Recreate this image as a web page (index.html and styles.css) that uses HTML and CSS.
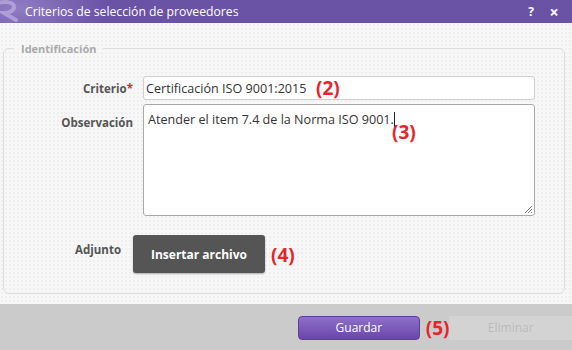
FILE: index.html
```html
<!DOCTYPE html>
<html lang="es">
<head>
  <meta charset="UTF-8">
  <meta name="viewport" content="width=device-width, initial-scale=1.0">
  <title>Criterios de selección de proveedores</title>
  <link rel="stylesheet" href="styles.css">
</head>
<body>

  <div class="dialog">
    <!-- Title bar -->
    <div class="titlebar">
      <svg class="logo" width="24" height="22" viewBox="0 0 24 22">
        <path d="M-2 3 C6 1 14 2 14 7 C14 11 9 13 4 13 L16 20" fill="none" stroke="#b9acdf" stroke-width="4" stroke-linecap="round" opacity="0.75"/>
      </svg>
      <span class="title">Criterios de selección de proveedores</span>
      <span class="tb-btn">?</span>
      <span class="tb-btn close">&times;</span>
    </div>

    <!-- Form body -->
    <div class="content">
      <fieldset class="group">
        <legend>Identificación</legend>

        <div class="form-row">
          <label for="criterio">Criterio<span class="req">*</span></label>
          <input type="text" id="criterio" value="Certificación ISO 9001:2015">
        </div>

        <div class="form-row top">
          <label>Observación</label>
          <div class="textarea">Atender el item 7.4 de la Norma ISO 9001.<span class="caret"></span>
            <svg class="grip" width="9" height="9" viewBox="0 0 9 9">
              <path d="M8 1 L1 8 M8 4 L4 8 M8 7 L7 8" stroke="#777" stroke-width="1"/>
            </svg>
          </div>
        </div>

        <div class="form-row attach">
          <label>Adjunto</label>
          <button class="btn dark">Insertar archivo</button>
        </div>
      </fieldset>

      <span class="note n2">(2)</span>
      <span class="note n3">(3)</span>
      <span class="note n4">(4)</span>
    </div>

    <!-- Footer -->
    <div class="footer">
      <button class="btn primary">Guardar</button>
      <span class="note n5">(5)</span>
      <button class="btn disabled">Eliminar</button>
    </div>
  </div>

</body>
</html>
```

FILE: styles.css
```css
body {
  margin: 0;
  font-family: "Open Sans", "Noto Sans", sans-serif;
  background-color: #f7f7f7;
  overflow: hidden;
}
.dialog {
  width: 572px;
  height: 350px;
  display: flex;
  flex-direction: column;
}
.titlebar {
  position: relative;
  height: 23px;
  display: flex;
  align-items: center;
  color: #fff;
  background-color: #6a52a5;
  background-image: radial-gradient(ellipse 90px 40px at 18px 8px, rgba(175, 160, 220, 0.55), rgba(106, 82, 165, 0) 100%);
}
.logo {
  position: absolute;
  left: 0;
  top: 0;
}
.title {
  margin-left: 25px;
  font-size: 12.2px;
  flex: 1;
}
.tb-btn {
  font-weight: bold;
  font-size: 12px;
  width: 12px;
  text-align: center;
  margin-right: 11px;
}
.tb-btn.close {
  font-size: 16px;
  font-weight: bold;
  margin-right: 12px;
}
.content {
  position: relative;
  flex: 1;
  padding: 0 7px 0 3px;
  background-color: #f7f7f7;
  background-image: radial-gradient(circle, #efefef 1px, transparent 1.2px);
  background-size: 4px 4px;
}
.group {
  margin: 18px 0 0 0;
  height: 253px;
  box-sizing: border-box;
  padding: 20px 29px 0 0;
  border: 1px solid #dedede;
  border-radius: 6px;
}
.group legend {
  margin-left: 10px;
  padding: 0 7px;
  font-size: 11px;
  font-weight: bold;
  color: #aaa;
}
.form-row {
  display: grid;
  grid-template-columns: 129px 1fr;
  column-gap: 10px;
  align-items: center;
  margin-bottom: 4px;
}
.form-row.top {
  align-items: start;
}
.form-row label {
  text-align: right;
  font-size: 11.5px;
  font-weight: bold;
  color: #555;
}
.form-row.top label {
  padding-top: 11px;
}
.req {
  color: #e0282e;
}
.form-row input {
  height: 24px;
  box-sizing: border-box;
  border: 1px solid #cfcfcf;
  border-radius: 3px;
  padding: 0 2px;
  font-family: inherit;
  font-size: 12.6px;
  color: #333;
  background: #fff;
}
.textarea {
  position: relative;
  height: 112px;
  box-sizing: border-box;
  border: 1px solid #aaa;
  border-radius: 3px;
  padding: 6px 4px;
  font-size: 12.6px;
  color: #333;
  background: #fff;
}
.caret {
  display: inline-block;
  width: 1px;
  height: 15px;
  vertical-align: -3px;
  background: #222;
}
.grip {
  position: absolute;
  right: 1px;
  bottom: 1px;
}
.form-row.attach {
  grid-template-columns: 117px 1fr;
  column-gap: 12px;
  margin-top: 19px;
}
.form-row.attach label {
  align-self: start;
  padding-top: 4px;
}
.btn {
  font-family: inherit;
  font-size: 12px;
  border: none;
  cursor: pointer;
}
.btn.dark {
  width: 132px;
  height: 38px;
  background-color: #555;
  color: #fff;
  font-weight: bold;
  border-radius: 3px;
  box-shadow: 0 1px 2px rgba(0, 0, 0, 0.3);
}
.footer {
  height: 46px;
  display: flex;
  align-items: center;
  padding-left: 298px;
  padding-top: 1px;
  box-sizing: border-box;
  background-color: #cbcbcb;
}
.btn.primary {
  width: 129px;
  height: 24px;
  border-radius: 4px;
  color: #fff;
  background: linear-gradient(#8c70c8, #6a46ab);
  border: 1px solid #5e3d9d;
}
.btn.disabled {
  margin-left: auto;
  width: 130px;
  height: 24px;
  color: #bbb;
  background-color: #d3d3d3;
}
.note {
  position: absolute;
  font-family: "Open Sans", sans-serif;
  font-weight: bold;
  font-size: 19px;
  line-height: 24px;
  color: #e8242b;
}
.n2 { left: 316px; top: 53px; }
.n3 { left: 392px; top: 97px; }
.n4 { left: 271px; top: 220px; }
.footer .note { position: static; margin-left: 6px; }
.form-row.attach label { padding-top: 7px; }
```
